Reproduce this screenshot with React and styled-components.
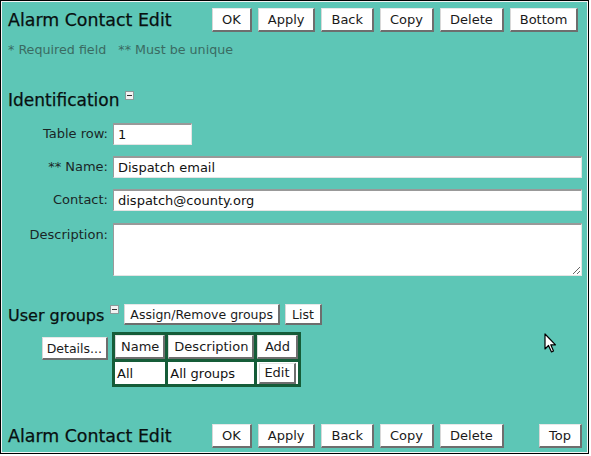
import React from "react";
import styled, { createGlobalStyle } from "styled-components";

const Global = createGlobalStyle`
  html, body { margin: 0; padding: 0; background: #fff; }
  body { font-family: "DejaVu Sans", "Liberation Sans", sans-serif; }
  * { box-sizing: border-box; }
`;

const Frame = styled.div`
  position: relative;
  width: 589px;
  height: 454px;
  border: 1px solid #000;
  box-shadow: inset 0 0 0 1px #f4f4f4;
  background: #5dc6b6;
  padding: 7px 6px 5px 7px;
  display: flex;
  flex-direction: column;
  color: #101818;
`;

const Bar = styled.div`
  display: flex;
  align-items: center;
  gap: 6px;
  height: 24px;
  margin-top: ${(p) => (p.$bottom ? "auto" : "0")};
`;

const Title = styled.div`
  width: 198px;
  font-size: 17.4px;
  line-height: 24px;
  white-space: nowrap;
  color: #081010;
  -webkit-text-stroke: 0.25px #081010;
`;

const Btn = styled.button`
  font-family: "DejaVu Sans", "Liberation Sans", sans-serif;
  font-size: ${(p) => (p.$small ? "12.5px" : "13px")};
  color: #1a1a1a;
  background: #fff;
  height: ${(p) => p.$h || 24}px;
  padding: 0 ${(p) => p.$pad ?? (p.$small ? 5 : 9)}px;
  border-style: solid;
  border-width: 1px 2px 2px 1px;
  border-color: #e8e8e8 #6e6e6e #6e6e6e #d8d8d8;
  margin: 0;
  margin-left: ${(p) => (p.$push ? "auto" : "0")};
  white-space: nowrap;
  cursor: default;
`;

const Note = styled.div`
  margin-top: 10px;
  font-size: 12.7px;
  line-height: 16px;
  color: #3a6b62;
  white-space: pre;
`;

const Heading = styled.div`
  display: flex;
  align-items: flex-start;
  gap: 6px;
  font-size: 17px;
  line-height: 20px;
  color: #081010;
  -webkit-text-stroke: 0.25px #081010;
  margin-top: 32px;
`;

const Collapse = styled.span`
  width: 9px;
  height: 9px;
  margin-top: 1px;
  border: 1px solid #8a9a9a;
  background: #f2f2f2;
  display: flex;
  align-items: center;
  justify-content: center;
  &::after {
    content: "";
    width: 5px;
    height: 1px;
    background: #333;
  }
`;

const Form = styled.div`
  display: grid;
  grid-template-columns: 100px 1fr;
  column-gap: 5px;
  row-gap: 11px;
  margin-top: 13px;
`;

const Label = styled.label`
  font-size: 13px;
  text-align: right;
  line-height: ${(p) => (p.$top ? "26px" : "22px")};
  color: #1a2626;
  white-space: nowrap;
`;

const Input = styled.input`
  font-family: "DejaVu Sans", "Liberation Sans", sans-serif;
  font-size: 13px;
  color: #111;
  height: 22px;
  width: ${(p) => p.$w || "100%"};
  padding: 0 4px;
  border-style: solid;
  border-width: 2px 1px 1px 1px;
  border-color: #999 #e4e4e4 #e4e4e4 #9a9a9a;
  background: #fff;
  outline: none;
`;

const Area = styled.textarea`
  font-family: "DejaVu Sans", "Liberation Sans", sans-serif;
  font-size: 13px;
  height: 53px;
  width: 100%;
  margin-top: 1px;
  border-style: solid;
  border-width: 2px 1px 1px 1px;
  border-color: #999 #e4e4e4 #e4e4e4 #9a9a9a;
  background: #fff;
  outline: none;
`;

const GroupHead = styled.div`
  display: flex;
  align-items: center;
  margin-top: 28px;
  height: 21px;
`;

const GroupTitle = styled.div`
  font-size: 16px;
  color: #081010;
  -webkit-text-stroke: 0.25px #081010;
  line-height: 21px;
  margin-top: 2px;
`;

const HeadTools = styled.div`
  display: flex;
  align-items: flex-start;
  gap: 5px;
  margin-left: 6px;
  height: 21px;
`;

const Groups = styled.div`
  display: grid;
  grid-template-columns: 100px auto;
  column-gap: 4px;
  justify-content: start;
  margin-top: 7px;
`;

const DetailsCell = styled.div`
  display: flex;
  justify-content: flex-end;
  padding-top: 5px;
`;

const Table = styled.table`
  border-collapse: separate;
  border-spacing: 3px;
  background: #155c38;
  padding: 0;
  border: 0;
`;

const Cell = styled.td`
  background: ${(p) => (p.$head ? "#5dc6b6" : "#fff")};
  padding: ${(p) => (p.$head ? "0" : "0 2px")};
  font-size: 13px;
  color: #111;
  height: ${(p) => (p.$head ? 24 : 22)}px;
  white-space: nowrap;
  text-align: ${(p) => (p.$btn ? "center" : "left")};
`;

const CellBtn = styled(Btn)`
  width: ${(p) => (p.$fill ? "100%" : "auto")};
  font-size: 13px;
  padding: ${(p) => (p.$fill ? "0 4px 0 5px" : "0 4px")};
  height: ${(p) => (p.$fill ? 24 : 21)}px;
  vertical-align: middle;
`;

const Cursor = styled.svg`
  position: absolute;
  left: 543px;
  top: 332px;
`;

export default function App() {
  const buttons = ["OK", "Apply", "Back", "Copy", "Delete"];
  return (
    <>
      <Global />
      <Frame>
        <Bar>
          <Title>Alarm Contact Edit</Title>
          {buttons.map((b) => (
            <Btn key={b}>{b}</Btn>
          ))}
          <Btn>Bottom</Btn>
        </Bar>
        <Note>{"* Required field   ** Must be unique"}</Note>
        <Heading>
          Identification
          <Collapse />
        </Heading>
        <Form>
          <Label>Table row:</Label>
          <div>
            <Input $w="79px" defaultValue="1" />
          </div>
          <Label>** Name:</Label>
          <Input defaultValue="Dispatch email" />
          <Label>Contact:</Label>
          <Input defaultValue="dispatch@county.org" />
          <Label $top>Description:</Label>
          <Area />
        </Form>
        <GroupHead>
          <GroupTitle>User groups</GroupTitle>
          <HeadTools>
            <Collapse />
            <Btn $small $h={21}>Assign/Remove groups</Btn>
            <Btn $small $h={21} $pad={6}>List</Btn>
          </HeadTools>
        </GroupHead>
        <Groups>
          <DetailsCell>
            <Btn $small $h={23} $pad={4}>Details...</Btn>
          </DetailsCell>
          <Table>
            <tbody>
              <tr>
                <Cell $head>
                  <CellBtn $fill>Name</CellBtn>
                </Cell>
                <Cell $head>
                  <CellBtn $fill>Description</CellBtn>
                </Cell>
                <Cell $head>
                  <CellBtn $fill>Add</CellBtn>
                </Cell>
              </tr>
              <tr>
                <Cell>All</Cell>
                <Cell>All groups</Cell>
                <Cell $btn>
                  <CellBtn>Edit</CellBtn>
                </Cell>
              </tr>
            </tbody>
          </Table>
        </Groups>
        <Bar $bottom>
          <Title>Alarm Contact Edit</Title>
          {buttons.map((b) => (
            <Btn key={b}>{b}</Btn>
          ))}
          <Btn $push>Top</Btn>
        </Bar>
        <Cursor width="14" height="21" viewBox="0 0 14 21">
          <path
            d="M1 1 L1 16 L4.5 12.5 L7.5 19 L9.5 18 L6.8 11.8 L11.5 11.8 Z"
            fill="#fff"
            stroke="#000"
            strokeWidth="1.2"
            strokeLinejoin="round"
          />
        </Cursor>
      </Frame>
    </>
  );
}
